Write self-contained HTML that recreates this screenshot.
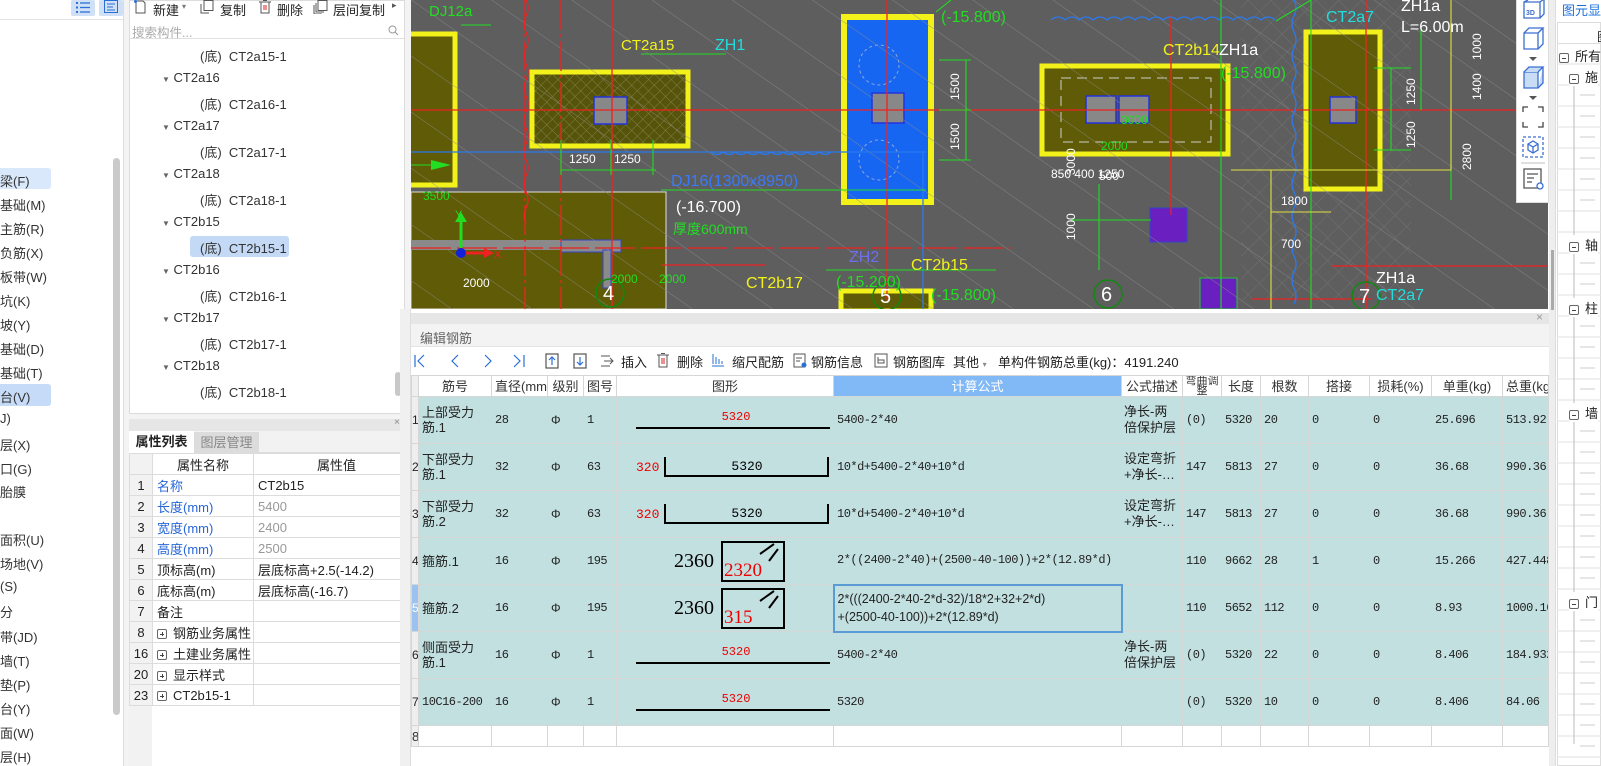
<!DOCTYPE html>
<html><head><meta charset="utf-8">
<style>
*{margin:0;padding:0;box-sizing:border-box}
body{width:1601px;height:766px;overflow:hidden;background:#fff;font-family:"Liberation Sans","Noto Sans CJK SC",sans-serif;font-size:12px;color:#222;position:relative}
.a{position:absolute;white-space:nowrap}
.nav{left:0;font-size:13px;color:#333}
.tr{font-size:13px;color:#333}
table.g{position:absolute;left:411px;top:375px;border-collapse:collapse;table-layout:fixed;width:1137px}
table.g td{border:1px solid #d6d6d6;font-size:12px;overflow:hidden;white-space:nowrap;padding:0 3px;vertical-align:middle;line-height:15px}
table.g td svg{display:block}
table.g tr.h td{height:21px;background:#fff;text-align:center;font-size:13px;color:#333}
table.g tr.r{height:47px}
table.g tr.r td{height:47px;background:#c3e0e1}
table.g tr.r td.n{background:#eeeeee;padding:0;text-align:center;font-size:12px}
.m{font-family:"Liberation Mono","Noto Sans CJK SC",monospace;font-size:11.5px;letter-spacing:-0.5px}
.pt td{border:1px solid #dcdcdc;height:21px;font-size:13px;padding:0 4px}
.pb{display:inline-block;width:10px;height:10px;border:1px solid #666;border-radius:2px;position:relative;vertical-align:middle;margin-right:6px}
.pb:before{content:"";position:absolute;left:2px;top:4px;width:4px;height:1px;background:#444}
.pb.p:after{content:"";position:absolute;left:4px;top:2px;width:1px;height:4px;background:#444}
</style></head><body>

<div class="a" style="left:71px;top:0;width:24px;height:16px;background:#cfe0f7;border-radius:2px"></div>
<div class="a" style="left:99px;top:0;width:24px;height:16px;background:#cfe0f7;border-radius:2px"></div>
<svg class="a" style="left:75px;top:1px" width="16" height="13"><g stroke="#2a6fd6" stroke-width="1.3"><line x1="5" y1="2" x2="15" y2="2"/><line x1="5" y1="6.5" x2="15" y2="6.5"/><line x1="5" y1="11" x2="15" y2="11"/></g><g fill="#2a6fd6"><rect x="1" y="1" width="2" height="2"/><rect x="1" y="5.5" width="2" height="2"/><rect x="1" y="10" width="2" height="2"/></g></svg>
<svg class="a" style="left:103px;top:0px" width="16" height="14"><rect x="1.5" y="0.5" width="13" height="12" fill="none" stroke="#2a6fd6"/><g stroke="#2a6fd6"><line x1="4" y1="4" x2="12" y2="4"/><line x1="4" y1="7" x2="10" y2="7"/><line x1="4" y1="10" x2="12" y2="10"/></g></svg>
<div class="a" style="left:0;top:19px;width:123px;height:1px;background:#e4e4e4"></div>
<div class="a" style="left:0;top:168px;width:51px;height:21px;background:#d9e8fb;border-radius:0 3px 3px 0"></div>
<div class="a" style="left:0;top:384px;width:51px;height:22px;background:#c5dbf7;border-radius:0 3px 3px 0"></div>
<div class="a nav" style="top:171px">梁(F)</div>
<div class="a nav" style="top:195px">基础(M)</div>
<div class="a nav" style="top:219px">主筋(R)</div>
<div class="a nav" style="top:243px">负筋(X)</div>
<div class="a nav" style="top:267px">板带(W)</div>
<div class="a nav" style="top:291px">坑(K)</div>
<div class="a nav" style="top:315px">坡(Y)</div>
<div class="a nav" style="top:339px">基础(D)</div>
<div class="a nav" style="top:363px">基础(T)</div>
<div class="a nav" style="top:387px">台(V)</div>
<div class="a nav" style="top:411px">J)</div>
<div class="a nav" style="top:435px">层(X)</div>
<div class="a nav" style="top:459px">口(G)</div>
<div class="a nav" style="top:482px">胎膜</div>
<div class="a nav" style="top:530px">面积(U)</div>
<div class="a nav" style="top:554px">场地(V)</div>
<div class="a nav" style="top:579px">(S)</div>
<div class="a nav" style="top:602px">分</div>
<div class="a nav" style="top:627px">带(JD)</div>
<div class="a nav" style="top:651px">墙(T)</div>
<div class="a nav" style="top:675px">垫(P)</div>
<div class="a nav" style="top:699px">台(Y)</div>
<div class="a nav" style="top:723px">面(W)</div>
<div class="a nav" style="top:747px">层(H)</div>
<div class="a" style="left:113px;top:158px;width:7px;height:557px;background:#cacaca;border-radius:4px"></div>
<div class="a" style="left:123px;top:0;width:1px;height:766px;background:#dcdcdc"></div>

<div class="a" style="left:124px;top:0;width:287px;height:766px;background:#f3f3f3"></div>
<div class="a" style="left:129px;top:0;width:276px;height:414px;background:#fff;border:1px solid #dcdcdc"></div>
<svg class="a" style="left:133px;top:0" width="14" height="14"><path d="M3 1 V13 H12 V3 L10 1 Z" fill="none" stroke="#555"/><circle cx="2.5" cy="1.5" r="1.5" fill="#2a6fd6"/></svg>
<div class="a" style="left:153px;top:0;font-size:13px">新建</div>
<div class="a" style="left:182px;top:2px;font-size:8px;color:#777">▾</div>
<svg class="a" style="left:200px;top:0" width="14" height="14"><rect x="4" y="0.5" width="9" height="10" fill="none" stroke="#555"/><path d="M1 4 V13 H9" fill="none" stroke="#555"/></svg>
<div class="a" style="left:220px;top:0;font-size:13px">复制</div>
<svg class="a" style="left:258px;top:0" width="14" height="14"><path d="M1 2 H13 M3 2 V13 H11 V2 M5 0.5 H9" fill="none" stroke="#555"/><path d="M6 5 V10 M8 5 V10" stroke="#d22"/></svg>
<div class="a" style="left:277px;top:0;font-size:13px">删除</div>
<svg class="a" style="left:313px;top:0" width="15" height="14"><rect x="5" y="0.5" width="9" height="10" fill="none" stroke="#555"/><path d="M3 3 V12 H11 M1 5 V14 H9" fill="none" stroke="#555"/></svg>
<div class="a" style="left:333px;top:0;font-size:13px">层间复制</div>
<div class="a" style="left:392px;top:0;font-size:9px;color:#555">▸</div>
<div class="a" style="left:130px;top:20px;width:274px;height:19px;border-bottom:1px solid #e0e0e0"></div>
<div class="a" style="left:132px;top:22px;font-size:12.5px;color:#aaa">搜索构件...</div>
<svg class="a" style="left:388px;top:25px" width="11" height="11"><circle cx="4.5" cy="4.5" r="3.5" fill="none" stroke="#999"/><line x1="7" y1="7" x2="10" y2="10" stroke="#999"/></svg>
<div class="a" style="left:190px;top:236px;width:99px;height:21px;background:#c3d9f5;border-radius:3px"></div>
<div class="a tr" style="left:200px;top:46px">(底)&nbsp; CT2a15-1</div>
<div class="a tr" style="left:162px;top:70px"><span style="font-size:8px;color:#666">▼</span> CT2a16</div>
<div class="a tr" style="left:200px;top:94px">(底)&nbsp; CT2a16-1</div>
<div class="a tr" style="left:162px;top:118px"><span style="font-size:8px;color:#666">▼</span> CT2a17</div>
<div class="a tr" style="left:200px;top:142px">(底)&nbsp; CT2a17-1</div>
<div class="a tr" style="left:162px;top:166px"><span style="font-size:8px;color:#666">▼</span> CT2a18</div>
<div class="a tr" style="left:200px;top:190px">(底)&nbsp; CT2a18-1</div>
<div class="a tr" style="left:162px;top:214px"><span style="font-size:8px;color:#666">▼</span> CT2b15</div>
<div class="a tr" style="left:200px;top:238px">(底)&nbsp; CT2b15-1</div>
<div class="a tr" style="left:162px;top:262px"><span style="font-size:8px;color:#666">▼</span> CT2b16</div>
<div class="a tr" style="left:200px;top:286px">(底)&nbsp; CT2b16-1</div>
<div class="a tr" style="left:162px;top:310px"><span style="font-size:8px;color:#666">▼</span> CT2b17</div>
<div class="a tr" style="left:200px;top:334px">(底)&nbsp; CT2b17-1</div>
<div class="a tr" style="left:162px;top:358px"><span style="font-size:8px;color:#666">▼</span> CT2b18</div>
<div class="a tr" style="left:200px;top:382px">(底)&nbsp; CT2b18-1</div>
<div class="a" style="left:395px;top:372px;width:6px;height:24px;background:#c8c8c8;border-radius:3px"></div>

<div class="a" style="left:129px;top:419px;width:276px;height:347px;background:#fff;border-left:1px solid #dcdcdc"></div>
<div class="a" style="left:129px;top:419px;width:276px;height:12px;background:#e6e6e6"></div>
<div class="a" style="left:394px;top:417px;font-size:10px;color:#888">×</div>
<div class="a" style="left:129px;top:431px;width:276px;height:22px;background:#f2f2f2;border-bottom:1px solid #ddd"></div>
<div class="a" style="left:129px;top:431px;width:65px;height:23px;background:#fff;font-size:13px;font-weight:bold;text-align:center;line-height:22px">属性列表</div>
<div class="a" style="left:194px;top:432px;width:65px;height:21px;background:#dcdcdc;font-size:13px;color:#888;text-align:center;line-height:21px">图层管理</div>
<div class="a" style="left:129px;top:453px;width:23px;height:313px;background:#f2f2f2"></div>
<table class="a pt" style="left:129px;top:453px;border-collapse:collapse;table-layout:fixed;width:290px">
<col style="width:23px"><col style="width:101px"><col style="width:166px">
<tr><td style="background:#f2f2f2"></td><td style="text-align:center">属性名称</td><td style="text-align:center">属性值</td></tr>
<tr><td style="background:#f2f2f2;text-align:center">1</td><td style="color:#2766d8">名称</td><td>CT2b15</td></tr>
<tr><td style="background:#f2f2f2;text-align:center">2</td><td style="color:#2766d8">长度(mm)</td><td style="color:#999">5400</td></tr>
<tr><td style="background:#f2f2f2;text-align:center">3</td><td style="color:#2766d8">宽度(mm)</td><td style="color:#999">2400</td></tr>
<tr><td style="background:#f2f2f2;text-align:center">4</td><td style="color:#2766d8">高度(mm)</td><td style="color:#999">2500</td></tr>
<tr><td style="background:#f2f2f2;text-align:center">5</td><td>顶标高(m)</td><td>层底标高+2.5(-14.2)</td></tr>
<tr><td style="background:#f2f2f2;text-align:center">6</td><td>底标高(m)</td><td>层底标高(-16.7)</td></tr>
<tr><td style="background:#f2f2f2;text-align:center">7</td><td>备注</td><td></td></tr>
<tr><td style="background:#f2f2f2;text-align:center">8</td><td><span class="pb p"></span>钢筋业务属性</td><td></td></tr>
<tr><td style="background:#f2f2f2;text-align:center;padding:0">16</td><td><span class="pb p"></span>土建业务属性</td><td></td></tr>
<tr><td style="background:#f2f2f2;text-align:center;padding:0">20</td><td><span class="pb p"></span>显示样式</td><td></td></tr>
<tr><td style="background:#f2f2f2;text-align:center;padding:0">23</td><td><span class="pb p"></span>CT2b15-1</td><td></td></tr>
</table>

<svg class="a" style="left:411px;top:0" width="1137" height="309" font-family="Liberation Sans Narrow, Liberation Sans, sans-serif">
<defs>
<pattern id="dg" width="46" height="46" patternUnits="userSpaceOnUse" patternTransform="rotate(-55)"><line x1="0" y1="0" x2="0" y2="46" stroke="#8c8c8c" stroke-width="1"/></pattern>
<pattern id="xh" width="8" height="8" patternUnits="userSpaceOnUse" patternTransform="rotate(45)"><rect width="8" height="8" fill="#56540a"/><line x1="0" y1="0" x2="0" y2="8" stroke="#8a8a55" stroke-width="0.8"/><line x1="0" y1="0" x2="8" y2="0" stroke="#8a8a55" stroke-width="0.8"/></pattern>
<pattern id="xg" width="16" height="16" patternUnits="userSpaceOnUse" patternTransform="rotate(45)"><line x1="0" y1="0" x2="0" y2="16" stroke="#7a7a7a"/><line x1="0" y1="0" x2="16" y2="0" stroke="#7a7a7a"/></pattern>
</defs>
<rect width="1137" height="309" fill="#5e5e5e"/>
<rect x="830" y="0" width="170" height="300" fill="url(#xg)" opacity="0.7"/>
<rect x="0" y="192" width="255" height="117" fill="#5f5b06" stroke="#ddd" stroke-width="1"/>
<rect x="0" y="240" width="210" height="10" fill="#8a8a8a"/>
<rect x="150" y="240" width="60" height="12" fill="#8a8a8a" stroke="#3344cc"/>
<rect x="192" y="250" width="8" height="38" fill="#8a8a8a" stroke="#3344cc"/>
<rect x="-5" y="34" width="49" height="151" fill="#5f5b06" stroke="#f2f21a" stroke-width="5"/>
<rect x="121" y="72" width="156" height="74" fill="url(#xh)" stroke="#f2f21a" stroke-width="5"/>
<rect x="183" y="97" width="33" height="27" fill="#888" stroke="#2233dd" stroke-width="1.5"/>
<rect x="433" y="17" width="87" height="185" fill="#1766f2" stroke="#f2f21a" stroke-width="6"/>
<rect x="461" y="93" width="32" height="30" fill="#888" stroke="#2233dd" stroke-width="1.5"/>
<circle cx="468" cy="65" r="20" fill="none" stroke="#8fa6d8" stroke-dasharray="3 3"/>
<circle cx="468" cy="160" r="20" fill="none" stroke="#8fa6d8" stroke-dasharray="3 3"/>
<rect x="631" y="66" width="186" height="88" fill="#5f5b06" stroke="#f2f21a" stroke-width="5"/>
<rect x="650" y="78" width="150" height="64" fill="none" stroke="#ccc" stroke-dasharray="10 6"/>
<rect x="675" y="96" width="30" height="27" fill="#888" stroke="#2233dd" stroke-width="1.5"/>
<rect x="708" y="96" width="30" height="27" fill="#888" stroke="#2233dd" stroke-width="1.5"/>
<rect x="895" y="32" width="74" height="157" fill="#5f5b06" stroke="#f2f21a" stroke-width="5"/>
<rect x="919" y="97" width="26" height="26" fill="#888" stroke="#2233dd" stroke-width="1.5"/>
<rect x="430" y="291" width="90" height="20" fill="#5f5b06" stroke="#f2f21a" stroke-width="5"/>
<rect x="739" y="208" width="37" height="34" fill="#6a1fc0" stroke="#3344cc"/>
<rect x="789" y="278" width="37" height="31" fill="#6a1fc0" stroke="#22cc22"/>
<rect width="1137" height="309" fill="url(#dg)" opacity="0.8"/>
<g stroke="#ee2222" stroke-width="1.3" fill="none">
<line x1="0" y1="110" x2="1137" y2="110"/>
<line x1="114" y1="0" x2="114" y2="309" stroke-dasharray="30 4 3 4"/>
<line x1="150" y1="0" x2="150" y2="309" stroke-dasharray="30 4 3 4"/>
<line x1="201" y1="0" x2="201" y2="309"/>
<line x1="476" y1="0" x2="476" y2="300"/>
<line x1="955" y1="0" x2="955" y2="309"/>
<path d="M115 0 q4 8 0 16 q-4 8 0 16 q4 8 0 16 q-4 8 0 16 q4 8 0 16 q-4 8 0 16 q4 8 0 16 q-4 8 0 16 q4 8 0 16 q-4 8 0 16 q4 8 0 16 q-4 8 0 16 q4 8 0 16 q-4 8 0 16"/>
<line x1="0" y1="248" x2="600" y2="248" stroke-dasharray="40 6"/>
<line x1="250" y1="265" x2="355" y2="265"/>
<line x1="920" y1="266" x2="1137" y2="266"/>
<line x1="840" y1="299" x2="960" y2="299"/>
<line x1="760" y1="15" x2="760" y2="215"/>
</g>
<g stroke="#2a7af0" stroke-width="1.3" fill="none">
<path d="M0 152 H515 M300 152 q6 5 12 0 q6 5 12 0 q6 5 12 0 q6 5 12 0 q6 5 12 0 q6 5 12 0 q6 5 12 0 q6 5 12 0 q6 5 12 0 q6 5 12 0"/>
<path d="M883 0 q4 8 0 16 q-4 8 0 16 q4 8 0 16 q-4 8 0 16 q4 8 0 16 q-4 8 0 16 q4 8 0 16 q-4 8 0 16 q4 8 0 16 q-4 8 0 16 q4 8 0 16 q-4 8 0 16 q4 8 0 16 q-4 8 0 16 q4 8 0 16 q-4 8 0 16 q4 8 0 16 q-4 8 0 16 q4 8 0 16"/>
<path d="M640 20 q7 -6 14 0 q7 -6 14 0 q7 -6 14 0 q7 -6 14 0 q7 -6 14 0 q7 -6 14 0 q7 -6 14 0 q7 -6 14 0 q7 -6 14 0 q7 -6 14 0 q7 -6 14 0 q7 -6 14 0 q7 -6 14 0 q7 -6 14 0 q7 -6 14 0 q7 -6 14 0"/>
<line x1="512" y1="152" x2="512" y2="309"/>
</g>
<g stroke="#22dd22" stroke-width="1.1" fill="none">
<line x1="150" y1="170" x2="245" y2="170"/><line x1="150" y1="140" x2="150" y2="175"/><line x1="200" y1="140" x2="200" y2="175"/><line x1="242" y1="140" x2="242" y2="175"/>
<line x1="555" y1="60" x2="555" y2="160"/><line x1="528" y1="60" x2="560" y2="60"/><line x1="528" y1="110" x2="560" y2="110"/><line x1="528" y1="160" x2="560" y2="160"/>
<line x1="900" y1="0" x2="900" y2="309"/><line x1="810" y1="0" x2="810" y2="309"/>
<line x1="963" y1="68" x2="1000" y2="68"/><line x1="963" y1="150" x2="1000" y2="150"/><line x1="980" y1="68" x2="980" y2="150"/>
<line x1="1010" y1="30" x2="1010" y2="110"/><line x1="1040" y1="110" x2="1040" y2="200"/>
<line x1="688" y1="184" x2="688" y2="270"/><line x1="660" y1="220" x2="740" y2="220"/>
<line x1="250" y1="190" x2="515" y2="190"/><line x1="415" y1="270" x2="585" y2="270"/>
<line x1="0" y1="165" x2="35" y2="165"/>
<line x1="50" y1="25" x2="80" y2="25"/><line x1="230" y1="54" x2="315" y2="54"/>
<line x1="525" y1="12" x2="540" y2="0"/>
<line x1="865" y1="21" x2="900" y2="0"/>
</g>
<path d="M20 160 L40 165 L20 170 Z" fill="#22dd22"/>
<g stroke="#e0e040" fill="none" stroke-width="1.1"><path d="M820 170 H1040 V0"/><path d="M860 170 V309"/><line x1="860" y1="212" x2="920" y2="212"/></g>
<g stroke="#118811" stroke-width="1.5" fill="none"><circle cx="199" cy="293" r="14"/><circle cx="476" cy="296" r="14"/><circle cx="697" cy="294" r="14"/><circle cx="955" cy="296" r="14"/></g>
<g fill="#fff" font-size="20"><text x="192" y="300">4</text><text x="469" y="303">5</text><text x="690" y="301">6</text><text x="948" y="303">7</text></g>
<line x1="50" y1="248" x2="50" y2="220" stroke="#22dd22" stroke-width="3"/><path d="M44 222 L50 212 L56 222Z" fill="#22dd22"/>
<line x1="50" y1="253" x2="75" y2="253" stroke="#ee2222" stroke-width="3"/><path d="M73 248 L83 253 L73 258Z" fill="#ee2222"/>
<circle cx="50" cy="253" r="5" fill="#1122dd"/>
<text x="44" y="218" fill="#22dd22" font-size="11">Y</text><text x="83" y="258" fill="#ee2222" font-size="11">X</text>
<g font-size="16">
<text x="18" y="16" fill="#22dd22" font-size="15">DJ12a</text>
<text x="210" y="50" fill="#f2f21a" font-size="15">CT2a15</text>
<text x="304" y="50" fill="#22dddd">ZH1</text>
<text x="530" y="22" fill="#22dd22">(-15.800)</text>
<text x="260" y="186" fill="#3a7af6">DJ16(1300x8950)</text>
<text x="265" y="212" fill="#fff">(-16.700)</text>
<text x="262" y="234" fill="#22dd22" font-size="14">厚度600mm</text>
<text x="752" y="55" fill="#f2f21a">CT2b14</text>
<text x="808" y="55" fill="#fff">ZH1a</text>
<text x="810" y="78" fill="#22dd22">(-15.800)</text>
<text x="915" y="22" fill="#22dddd">CT2a7</text>
<text x="990" y="11" fill="#fff">ZH1a</text>
<text x="990" y="32" fill="#fff">L=6.00m</text>
<text x="335" y="288" fill="#f2f21a">CT2b17</text>
<text x="438" y="262" fill="#6e6ef0">ZH2</text>
<text x="425" y="287" fill="#22dd22">(-15.200)</text>
<text x="500" y="270" fill="#f2f21a">CT2b15</text>
<text x="520" y="300" fill="#22dd22">(-15.800)</text>
<text x="965" y="300" fill="#22dddd">CT2a7</text>
<text x="965" y="283" fill="#fff">ZH1a</text>
</g>
<g font-size="12" fill="#fff"><text x="158" y="163">1250</text><text x="203" y="163">1250</text><text x="640" y="178">850 400 1250</text><text x="688" y="180">500</text><text x="870" y="205">1800</text><text x="870" y="248">700</text><text x="52" y="287">2000</text></g>
<g font-size="12" fill="#22dd22"><text x="200" y="283">2000</text><text x="248" y="283">2000</text><text x="710" y="124">3000</text><text x="690" y="150">2000</text><text x="12" y="200">3500</text></g>
<text x="0" y="0" fill="#fff" font-size="12" transform="translate(548,100) rotate(-90)">1500</text>
<text x="0" y="0" fill="#fff" font-size="12" transform="translate(548,150) rotate(-90)">1500</text>
<text x="0" y="0" fill="#fff" font-size="12" transform="translate(1004,105) rotate(-90)">1250</text>
<text x="0" y="0" fill="#fff" font-size="12" transform="translate(1004,148) rotate(-90)">1250</text>
<text x="0" y="0" fill="#fff" font-size="12" transform="translate(1070,60) rotate(-90)">1000</text>
<text x="0" y="0" fill="#fff" font-size="12" transform="translate(1070,100) rotate(-90)">1400</text>
<text x="0" y="0" fill="#fff" font-size="12" transform="translate(1060,170) rotate(-90)">2800</text>
<text x="0" y="0" fill="#fff" font-size="12" transform="translate(664,175) rotate(-90)">3000</text>
<text x="0" y="0" fill="#fff" font-size="12" transform="translate(664,240) rotate(-90)">1000</text>
</svg>

<div class="a" style="left:1516px;top:0;width:33px;height:203px;background:#fff;border:1px solid #ddd;border-top:none"></div>
<svg class="a" style="left:1519px;top:0" width="28" height="200" fill="none" stroke="#3a6fd0" stroke-width="1.3">
<path d="M5 2 H21 V18 H5Z M5 2 L9 0 M21 2 L25 -1 V14 L21 18"/><text x="7" y="15" font-size="7" fill="#3a6fd0" stroke="none" font-weight="bold">3D</text>
<path d="M5 33 H19 V49 H5Z M5 33 L10 28 H24 L19 33 M24 28 V44 L19 49"/>
<path d="M10 57 L14 61 L18 57Z" fill="#555" stroke="none"/>
<path d="M5 72 H19 V88 H5Z" fill="#c9dcf6"/><path d="M5 72 L10 67 H24 L19 72 M24 67 V83 L19 88" fill="#c9dcf6"/>
<path d="M10 96 L14 100 L18 96Z" fill="#555" stroke="none"/>
<path d="M4 112 V107 H9 M19 107 H24 V112 M24 122 V127 H19 M9 127 H4 V122" stroke="#444"/>
<rect x="4" y="137" width="20" height="20" stroke-dasharray="3 2"/><path d="M9 144 L14 141 L19 144 V150 L14 153 L9 150Z M9 144 L14 147 L19 144 M14 147 V153"/>
<line x1="2" y1="163" x2="26" y2="163" stroke="#ccc"/>
<path d="M5 169 H22 V188 H5Z M8 174 H19 M8 178 H15 M8 182 H13" stroke="#555"/><circle cx="21" cy="186" r="3" fill="#fff"/>
</svg>

<div class="a" style="left:1549px;top:0;width:6px;height:766px;background:#eee"></div>
<div class="a" style="left:1551px;top:250px;width:3px;height:60px;background:#aaa"></div>
<div class="a" style="left:1555px;top:0;width:46px;height:766px;background:#fff;border-left:1px solid #ddd"></div>
<div class="a" style="left:1562px;top:0;font-size:13px;color:#1a6fdc">图元显示</div>
<div class="a" style="left:1557px;top:22px;width:44px;height:744px;border:1px solid #ddd"></div>
<div class="a" style="left:1597px;top:28px;font-size:12px">图</div>
<div class="a" style="left:1557px;top:43px;width:44px;height:1px;background:#ddd"></div>
<svg class="a" style="left:1557px;top:44px" width="44" height="722">
<g stroke="#e2e2e2"><line x1="0" y1="20" x2="44" y2="20"/><line x1="0" y1="41" x2="44" y2="41"/><line x1="0" y1="62" x2="44" y2="62"/><line x1="0" y1="83" x2="44" y2="83"/><line x1="0" y1="104" x2="44" y2="104"/><line x1="0" y1="125" x2="44" y2="125"/><line x1="0" y1="146" x2="44" y2="146"/><line x1="0" y1="167" x2="44" y2="167"/><line x1="0" y1="188" x2="44" y2="188"/><line x1="0" y1="209" x2="44" y2="209"/><line x1="0" y1="230" x2="44" y2="230"/><line x1="0" y1="251" x2="44" y2="251"/><line x1="0" y1="272" x2="44" y2="272"/><line x1="0" y1="293" x2="44" y2="293"/><line x1="0" y1="314" x2="44" y2="314"/><line x1="0" y1="335" x2="44" y2="335"/><line x1="0" y1="356" x2="44" y2="356"/><line x1="0" y1="377" x2="44" y2="377"/><line x1="0" y1="398" x2="44" y2="398"/><line x1="0" y1="419" x2="44" y2="419"/><line x1="0" y1="440" x2="44" y2="440"/><line x1="0" y1="461" x2="44" y2="461"/><line x1="0" y1="482" x2="44" y2="482"/><line x1="0" y1="503" x2="44" y2="503"/><line x1="0" y1="524" x2="44" y2="524"/><line x1="0" y1="545" x2="44" y2="545"/><line x1="0" y1="566" x2="44" y2="566"/><line x1="0" y1="587" x2="44" y2="587"/><line x1="0" y1="608" x2="44" y2="608"/><line x1="0" y1="629" x2="44" y2="629"/><line x1="0" y1="650" x2="44" y2="650"/><line x1="0" y1="671" x2="44" y2="671"/><line x1="0" y1="692" x2="44" y2="692"/><line x1="0" y1="713" x2="44" y2="713"/></g>
<g stroke="#bbb"><line x1="17" y1="36" x2="17" y2="176"/><line x1="17" y1="57" x2="17" y2="700"/><line x1="17" y1="200" x2="38" y2="200"/></g>
<g stroke="#ccc"><line x1="23" y1="51" x2="38" y2="51"/><line x1="23" y1="72" x2="38" y2="72"/><line x1="23" y1="93" x2="38" y2="93"/><line x1="23" y1="114" x2="38" y2="114"/><line x1="23" y1="135" x2="38" y2="135"/><line x1="23" y1="156" x2="38" y2="156"/><line x1="23" y1="219" x2="38" y2="219"/><line x1="23" y1="240" x2="38" y2="240"/><line x1="23" y1="282" x2="38" y2="282"/><line x1="23" y1="303" x2="38" y2="303"/><line x1="23" y1="324" x2="38" y2="324"/><line x1="23" y1="345" x2="38" y2="345"/><line x1="23" y1="387" x2="38" y2="387"/><line x1="23" y1="408" x2="38" y2="408"/><line x1="23" y1="429" x2="38" y2="429"/><line x1="23" y1="450" x2="38" y2="450"/><line x1="23" y1="471" x2="38" y2="471"/><line x1="23" y1="492" x2="38" y2="492"/><line x1="23" y1="513" x2="38" y2="513"/><line x1="23" y1="534" x2="38" y2="534"/><line x1="23" y1="576" x2="38" y2="576"/><line x1="23" y1="597" x2="38" y2="597"/><line x1="23" y1="618" x2="38" y2="618"/><line x1="23" y1="639" x2="38" y2="639"/><line x1="23" y1="660" x2="38" y2="660"/><line x1="23" y1="681" x2="38" y2="681"/><line x1="23" y1="702" x2="38" y2="702"/></g>
</svg>
<div class="a" style="left:1559px;top:46px;font-size:13px"><span class="pb"></span>所有</div>
<div class="a" style="left:1569px;top:67px;font-size:13px;background:#fff"><span class="pb"></span>施</div>
<div class="a" style="left:1569px;top:235px;font-size:13px;background:#fff"><span class="pb"></span>轴</div>
<div class="a" style="left:1569px;top:298px;font-size:13px;background:#fff"><span class="pb"></span>柱</div>
<div class="a" style="left:1569px;top:403px;font-size:13px;background:#fff"><span class="pb"></span>墙</div>
<div class="a" style="left:1569px;top:592px;font-size:13px;background:#fff"><span class="pb"></span>门</div>

<div class="a" style="left:400px;top:309px;width:1149px;height:457px;background:#fff"></div>
<div class="a" style="left:400px;top:309px;width:11px;height:457px;background:#f0f0f0;border-right:1px solid #ddd"></div>
<div class="a" style="left:411px;top:313px;width:1138px;height:11px;background:#e6e6e6"></div>
<div class="a" style="left:1536px;top:310px;font-size:12px;color:#999">×</div>
<div class="a" style="left:411px;top:324px;width:1138px;height:23px;background:#f3f3f3;border-bottom:1px solid #e4e4e4"></div>
<div class="a" style="left:420px;top:328px;font-size:13px;color:#666">编辑钢筋</div>
<svg class="a" style="left:412px;top:353px" width="180" height="16" fill="none" stroke="#2a6fd6" stroke-width="1.2">
<path d="M3 2 V14 M12 2 L6 8 L12 14"/><path d="M46 2 L40 8 L46 14"/><path d="M73 2 L79 8 L73 14"/><path d="M102 2 L108 8 L102 14 M112 2 V14"/>
<rect x="134" y="1" width="12" height="14" stroke="#555"/><path d="M140 12 V4 M137 7 L140 4 L143 7"/>
<rect x="162" y="1" width="12" height="14" stroke="#555"/><path d="M168 4 V12 M165 9 L168 12 L171 9"/>
</svg>
<svg class="a" style="left:600px;top:354px" width="16" height="14"><path d="M1 2 H10 M1 12 H10 M4 7 H13 M10 4 L13 7 L10 10" fill="none" stroke="#555"/></svg>
<div class="a" style="left:621px;top:352px;font-size:13px">插入</div>
<svg class="a" style="left:656px;top:353px" width="14" height="15"><path d="M1 2 H13 M3 2 V14 H11 V2 M5 0.5 H9" fill="none" stroke="#555"/><path d="M6 5 V11 M8 5 V11" stroke="#d22"/></svg>
<div class="a" style="left:677px;top:352px;font-size:13px">删除</div>
<svg class="a" style="left:711px;top:353px" width="14" height="15"><path d="M2 1 V11 M5 4 V11 M8 6 V11 M11 8 V11 M1 13 H13" stroke="#2a6fd6" fill="none"/></svg>
<div class="a" style="left:732px;top:352px;font-size:13px">缩尺配筋</div>
<svg class="a" style="left:793px;top:353px" width="14" height="15"><rect x="1" y="1" width="11" height="13" fill="none" stroke="#555"/><path d="M3 5 H9 M3 8 H7" stroke="#555"/><circle cx="11" cy="12" r="2.5" fill="#2a6fd6"/></svg>
<div class="a" style="left:811px;top:352px;font-size:13px">钢筋信息</div>
<svg class="a" style="left:874px;top:353px" width="14" height="15"><rect x="1" y="1" width="12" height="13" fill="none" stroke="#555"/><path d="M4 4 V10 H10 V7 H4" stroke="#555" fill="none"/></svg>
<div class="a" style="left:893px;top:352px;font-size:13px">钢筋图库</div>
<div class="a" style="left:953px;top:352px;font-size:13px">其他 <span style="font-size:8px;color:#888">▾</span></div>
<div class="a" style="left:998px;top:352px;font-size:13px">单构件钢筋总重(kg)：4191.240</div>

<table class="g">
<col style="width:7px"><col style="width:73px"><col style="width:56px"><col style="width:36px"><col style="width:33px"><col style="width:217px"><col style="width:288px"><col style="width:61px"><col style="width:39px"><col style="width:39px"><col style="width:48px"><col style="width:61px"><col style="width:62px"><col style="width:71px"><col style="width:46px">
<tr class="h"><td style="background:#efefef"></td><td>筋号</td><td>直径(mm)</td><td>级别</td><td>图号</td><td>图形</td><td style="background:#80b9f5;color:#fff">计算公式</td><td>公式描述</td><td style="font-size:11px;line-height:10px;padding:0;vertical-align:top">弯曲调<br>整</td><td>长度</td><td>根数</td><td>搭接</td><td>损耗(%)</td><td>单重(kg)</td><td>总重(kg)</td></tr>
<tr class="r"><td class="n">1</td><td style="white-space:normal;font-size:13px">上部受力筋.1</td><td class="m">28</td><td>Φ</td><td class="m">1</td><td style="padding:0"><svg width="217" height="42"><text x="119" y="21" fill="#e00" font-size="12" text-anchor="middle" font-family="Liberation Mono">5320</text><line x1="19" y1="29" x2="213" y2="29" stroke="#000" stroke-width="2"/></svg></td><td class="m">5400-2*40</td><td style="white-space:normal;font-size:13px;padding:0 2px;line-height:16px">净长-两倍保护层</td><td class="m">(0)</td><td class="m">5320</td><td class="m">20</td><td class="m">0</td><td class="m">0</td><td class="m">25.696</td><td class="m">513.92</td></tr>
<tr class="r"><td class="n">2</td><td style="white-space:normal;font-size:13px">下部受力筋.1</td><td class="m">32</td><td>Φ</td><td class="m">63</td><td style="padding:0"><svg width="217" height="42"><text x="19" y="25" fill="#e00" font-size="13" font-family="Liberation Mono">320</text><path d="M48 11 V30 H211 V11" fill="none" stroke="#000" stroke-width="2"/><text x="130" y="24" font-size="13" text-anchor="middle" font-family="Liberation Mono">5320</text></svg></td><td class="m">10*d+5400-2*40+10*d</td><td style="white-space:normal;font-size:13px;padding:0 2px;line-height:16px">设定弯折+净长-…</td><td class="m">147</td><td class="m">5813</td><td class="m">27</td><td class="m">0</td><td class="m">0</td><td class="m">36.68</td><td class="m">990.36</td></tr>
<tr class="r"><td class="n">3</td><td style="white-space:normal;font-size:13px">下部受力筋.2</td><td class="m">32</td><td>Φ</td><td class="m">63</td><td style="padding:0"><svg width="217" height="42"><text x="19" y="25" fill="#e00" font-size="13" font-family="Liberation Mono">320</text><path d="M48 11 V30 H211 V11" fill="none" stroke="#000" stroke-width="2"/><text x="130" y="24" font-size="13" text-anchor="middle" font-family="Liberation Mono">5320</text></svg></td><td class="m">10*d+5400-2*40+10*d</td><td style="white-space:normal;font-size:13px;padding:0 2px;line-height:16px">设定弯折+净长-…</td><td class="m">147</td><td class="m">5813</td><td class="m">27</td><td class="m">0</td><td class="m">0</td><td class="m">36.68</td><td class="m">990.36</td></tr>
<tr class="r"><td class="n">4</td><td style="font-size:13px">箍筋.1</td><td class="m">16</td><td>Φ</td><td class="m">195</td><td style="padding:0"><svg width="217" height="42"><text x="57" y="27" font-size="20" font-family="Liberation Serif">2360</text><rect x="105" y="2" width="62" height="39" fill="none" stroke="#000" stroke-width="2"/><path d="M143 14 L157 4 M152 21 L161 9" stroke="#000" stroke-width="2"/><text x="107" y="36" fill="#e00" font-size="19" font-family="Liberation Serif">2320</text></svg></td><td class="m">2*((2400-2*40)+(2500-40-100))+2*(12.89*d)</td><td></td><td class="m">110</td><td class="m">9662</td><td class="m">28</td><td class="m">1</td><td class="m">0</td><td class="m">15.266</td><td class="m">427.448</td></tr>
<tr class="r"><td class="n" style="background:#9cc3ef;color:#fff">5</td><td style="font-size:13px">箍筋.2</td><td class="m">16</td><td>Φ</td><td class="m">195</td><td style="padding:0"><svg width="217" height="42"><text x="57" y="27" font-size="20" font-family="Liberation Serif">2360</text><rect x="105" y="2" width="62" height="39" fill="none" stroke="#000" stroke-width="2"/><path d="M143 14 L157 4 M152 21 L161 9" stroke="#000" stroke-width="2"/><text x="107" y="36" fill="#e00" font-size="19" font-family="Liberation Serif">315</text></svg></td><td style="border:2px solid #5b9bd5;font-size:12.5px;line-height:18px">2*(((2400-2*40-2*d-32)/18*2+32+2*d)<br>+(2500-40-100))+2*(12.89*d)</td><td></td><td class="m">110</td><td class="m">5652</td><td class="m">112</td><td class="m">0</td><td class="m">0</td><td class="m">8.93</td><td class="m">1000.16</td></tr>
<tr class="r"><td class="n">6</td><td style="white-space:normal;font-size:13px">侧面受力筋.1</td><td class="m">16</td><td>Φ</td><td class="m">1</td><td style="padding:0"><svg width="217" height="42"><text x="119" y="21" fill="#e00" font-size="12" text-anchor="middle" font-family="Liberation Mono">5320</text><line x1="19" y1="29" x2="213" y2="29" stroke="#000" stroke-width="2"/></svg></td><td class="m">5400-2*40</td><td style="white-space:normal;font-size:13px;padding:0 2px;line-height:16px">净长-两倍保护层</td><td class="m">(0)</td><td class="m">5320</td><td class="m">22</td><td class="m">0</td><td class="m">0</td><td class="m">8.406</td><td class="m">184.932</td></tr>
<tr class="r"><td class="n">7</td><td class="m">10C16-200</td><td class="m">16</td><td>Φ</td><td class="m">1</td><td style="padding:0"><svg width="217" height="42"><text x="119" y="21" fill="#e00" font-size="12" text-anchor="middle" font-family="Liberation Mono">5320</text><line x1="19" y1="29" x2="213" y2="29" stroke="#000" stroke-width="2"/></svg></td><td class="m">5320</td><td></td><td class="m">(0)</td><td class="m">5320</td><td class="m">10</td><td class="m">0</td><td class="m">0</td><td class="m">8.406</td><td class="m">84.06</td></tr>
<tr class="h"><td style="background:#efefef;text-align:center;padding:0">8</td><td></td><td></td><td></td><td></td><td></td><td></td><td></td><td></td><td></td><td></td><td></td><td></td><td></td><td></td></tr>
</table>
</body></html>
